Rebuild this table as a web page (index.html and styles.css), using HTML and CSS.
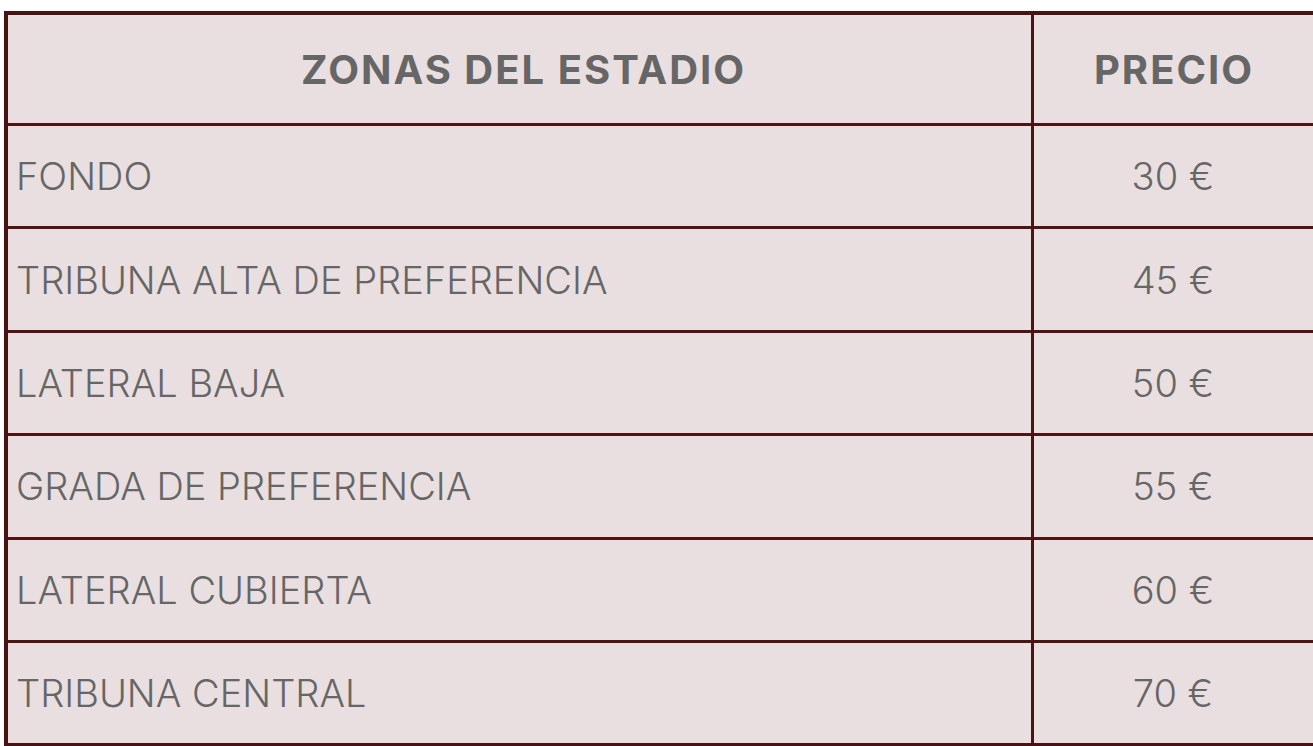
FILE: index.html
```html
<!DOCTYPE html>
<html lang="es">
<head>
<meta charset="utf-8">
<title>Precios</title>
<link rel="stylesheet" href="styles.css">
</head>
<body>
<table class="prices">
  <thead>
    <tr>
      <th class="zone-head">ZONAS DEL ESTADIO</th>
      <th class="price-head">PRECIO</th>
    </tr>
  </thead>
  <tbody>
    <tr><td class="zone">FONDO</td><td class="price">30 €</td></tr>
    <tr><td class="zone">TRIBUNA ALTA DE PREFERENCIA</td><td class="price">45 €</td></tr>
    <tr><td class="zone">LATERAL BAJA</td><td class="price">50 €</td></tr>
    <tr><td class="zone">GRADA DE PREFERENCIA</td><td class="price">55 €</td></tr>
    <tr><td class="zone">LATERAL CUBIERTA</td><td class="price">60 €</td></tr>
    <tr><td class="zone">TRIBUNA CENTRAL</td><td class="price">70 €</td></tr>
  </tbody>
</table>
</body>
</html>
```
FILE: styles.css
```css
html, body {
  margin: 0;
  padding: 0;
  background: #ffffff;
  overflow: hidden;
}
body {
  padding: 11px 0 0 4px;
  font-family: Inter, "Open Sans", sans-serif;
  color: #666666;
}
.prices {
  border-collapse: collapse;
  width: 1320px;
  table-layout: fixed;
  background: #e9dfe0;
  border: 4px solid #4a1313;
}
.prices th, .prices td {
  border: 3px solid #4e1414;
  padding: 0 0 0 8px;
  vertical-align: middle;
}
.prices th {
  height: 108px;
  font-weight: 700;
  font-size: 40px;
  letter-spacing: 2px;
  text-align: center;
  color: #666666;
}
.prices td {
  height: 100.4px;
  font-weight: 300;
  font-size: 38px;
}
.prices .zone-head { width: 1015px; }
.prices .price { text-align: center; padding: 0 8px 0 0; }
.prices .price-head { text-align: center; padding: 0 6px 0 0; }
.prices .zone { text-align: left; }
```
